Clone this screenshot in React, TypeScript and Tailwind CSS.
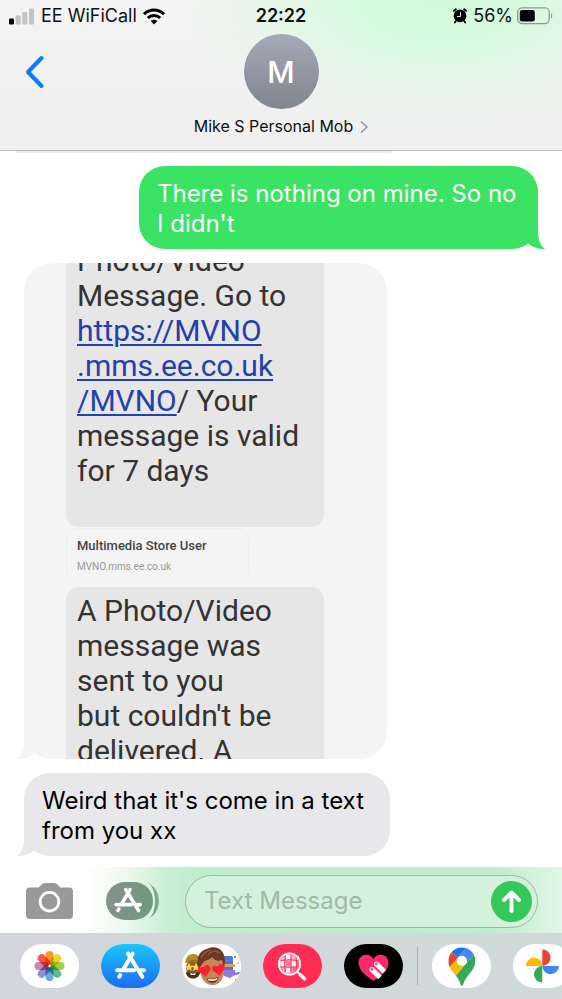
import type { ReactNode } from "react"
import clsx from "clsx"

function SignalIcon() {
  return (
    <svg viewBox="0 0 26 17" className="h-[17px] w-[26px]" aria-hidden="true">
      <rect x="0" y="10.5" width="5" height="6" rx="1.2" fill="#000" />
      <rect x="6.7" y="7.5" width="5" height="9" rx="1.2" fill="#c2c3c2" />
      <rect x="13.3" y="4" width="5" height="12.5" rx="1.2" fill="#c2c3c2" />
      <rect x="20" y="0.5" width="5" height="16" rx="1.2" fill="#c2c3c2" />
    </svg>
  )
}

function WifiIcon() {
  return (
    <svg viewBox="0 0 22 17" className="h-[17px] w-[22px]" fill="none" stroke="#000" strokeWidth="3" aria-hidden="true">
      <path d="M1 6.2C6.5.6 15.5.6 21 6.2" />
      <path d="M4.8 10C8.2 6.6 13.8 6.6 17.2 10" />
      <path d="M11 16.5l-3.3-3.4c1.8-1.8 4.8-1.8 6.6 0z" fill="#000" stroke="none" />
    </svg>
  )
}

function AlarmIcon() {
  return (
    <svg viewBox="0 0 14 16" className="h-4 w-[14px]" aria-hidden="true">
      <circle cx="7" cy="7.800" r="6.400" />
      <path d="M1 2.800L2.800 1.300M13 2.800L11.200 1.300" stroke="#000" strokeWidth="2" strokeLinecap="round" />
      <path d="M2.800 13l-1 1.500M11.200 13l1 1.500" stroke="#000" strokeWidth="1.800" strokeLinecap="round" />
      <path d="M7.500 4v4.500H4" stroke="#cdeed3" strokeWidth="1" fill="none" />
    </svg>
  )
}

function BatteryIcon() {
  return (
    <svg viewBox="0 0 36 18" className="h-[18px] w-9" aria-hidden="true">
      <rect x=".7" y=".9" width="31.6" height="15.8" rx="4.6" fill="none" stroke="#8d9a90" strokeWidth="1.3" />
      <rect x="2.8" y="3" width="15" height="11.6" rx="2.4" fill="#000" />
      <path d="M34 6.2c1.7.8 1.7 4.4 0 5.2z" fill="#8d9a90" />
    </svg>
  )
}

/** The little curl in the bottom corner of a bubble */
function Tail({ side, className }: { side: "left" | "right"; className: string }) {
  return (
    <svg
      viewBox="0 0 20 28"
      className={clsx("absolute bottom-0 h-7 w-5", side === "right" ? "-right-[7px]" : "-left-[7px] -scale-x-100", className)}
      aria-hidden="true"
    >
      <path d="M13 0V9C13 18 15 24.500 20 28C13 28 7 26 3 22L0 10Z" fill="currentColor" />
    </svg>
  )
}

function AppStoreGlyph() {
  return (
    <g fill="none" stroke="#fff" strokeWidth="4" strokeLinecap="round">
      <path d="M31.700 9.600L22 26" />
      <path d="M27 9.600L41.300 32.800" />
      <path d="M16.200 26.300H33" />
      <path d="M39.500 26.300H43" />
      <path d="M19.200 31.200L18.300 32.700" />
    </g>
  )
}

const petals = [
  { angle: 0, color: "#f99b1c" },
  { angle: 45, color: "#e4dc1f" },
  { angle: 90, color: "#a5ce4b" },
  { angle: 135, color: "#55bd90" },
  { angle: 180, color: "#6ba8dd" },
  { angle: 225, color: "#8f8fcb" },
  { angle: 270, color: "#c985b9" },
  { angle: 315, color: "#f4554d" },
]

function PhotosArt() {
  return (
    <g>
      {petals.map((petal) => (
        <rect
          key={petal.angle}
          x="25.500"
          y="7"
          width="8"
          height="14"
          rx="4"
          fill={petal.color}
          transform={`rotate(${petal.angle} 29.500 22)`}
          className="mix-blend-multiply"
        />
      ))}
    </g>
  )
}

function AppStoreArt() {
  return (
    <g>
      <defs>
        <linearGradient id="store" x1="0" y1="0" x2="0" y2="1">
          <stop offset="0" stopColor="#1cc5fb" />
          <stop offset="1" stopColor="#1c6df2" />
        </linearGradient>
      </defs>
      <rect width="59" height="44" fill="url(#store)" />
      <AppStoreGlyph />
    </g>
  )
}

const heart = "M0 7.500L-6 1.500C-9-2-4.500-8 0-3.500C4.500-8 9-2 6 1.500Z"
const star = "M0-5L1.400-1.500 5-1.300 2.300 1 3.200 4.500 0 2.600-3.200 4.500-2.300 1-5-1.300-1.400-1.500Z"

function MemojiArt() {
  return (
    <g>
      {/* bearded face on the left */}
      <ellipse cx="11" cy="24" rx="7" ry="9" fill="#8f5a33" />
      <path d="M4 28c3 1 10 1 14 0 0 4-3 6.500-7 6.500S4 32 4 28z" fill="#4a3020" />
      <path d="M3.500 19C3 7 19 7 19 19c-5-2-11-2-15.500 0z" fill="#b58d1f" />
      <path d="M3.500 18.500c4-2.500 11-2.500 15-1" stroke="#94711a" fill="none" />
      <path d={star} fill="#ffd64a" transform="translate(7 23) scale(.9)" />
      <path d={star} fill="#ffd64a" transform="translate(14 23) scale(.9)" />
      <path d="M8 29q3 1.500 6 0l-1 2H9z" fill="#fff" />
      {/* robot on the right */}
      <rect x="41" y="12" width="10" height="20" rx="3" fill="#6f63cf" />
      <rect x="41" y="12" width="10" height="6" rx="2" fill="#4b7ce0" />
      <rect x="41" y="20" width="12" height="3" rx="1.500" fill="#d9a54a" />
      <path d="M42 26h11v5l-5 3-6-2z" fill="#8d7be3" />
      <path d="M52 29q4 2 5-1" stroke="#7a68d4" strokeWidth="2" fill="none" />
      <circle cx="53" cy="13" r="1" fill="#2e6fe8" />
      <circle cx="56" cy="19" r="1" fill="#f0b636" />
      <circle cx="54" cy="36" r="1" fill="#3b7aea" />
      {/* heart eyes in the middle */}
      <path d="M18 20C17 33 22 41 30.500 41S43 33 42.500 19C40 9 22 9 18 20z" fill="#c98459" />
      <path d="M16.500 24C13 11 20 6 25 5c7-4 18-1 18 12l-1 7-2-8c-4 2-8 0-10-3-2 3-6 3-8.500 5-1.500 2-2 4-5 6z" fill="#6b3922" />
      <path d="M19 14c2-5 6-7 10-8M26 11c3-4 8-5 12-2" stroke="#96593a" strokeWidth="1.300" fill="none" />
      <path d="M24.500 34.500q6.500 1 12-1.500-1 5.500-6 6-4.500-.5-6-4.500z" fill="#7a2521" />
      <path d="M25.500 35q5.500 1 10-1l-1 2q-4 1.500-8 .5z" fill="#fff" />
      <path d={heart} fill="#f9222f" transform="translate(22.500 26) rotate(-10) scale(.9)" />
      <path d={heart} fill="#f9222f" transform="translate(36.500 25) rotate(-10) scale(.9)" />
      <path d="M18.500 23.500q1-1.800 3-1.200M32.500 22.500q1-1.800 3-1.200" stroke="#ff8b8d" fill="none" />
    </g>
  )
}

function ImagesArt() {
  return (
    <g>
      <rect width="59" height="44" fill="#ff2d55" />
      <circle cx="26.500" cy="20" r="9.500" fill="#ffb3c1" />
      <path d="M17.500 17h5v5h-5zM23 11h4.500v5H23zM28.500 17h4v5h-4zM23 23.500h4v5h-4zM33 12h3v4h-3z" fill="#fff" />
      <path d="M23 17h4.500v5H23zM28.500 23.500h4.500v5h-4.500zM33.500 17h3v5h-3z" fill="#ff7590" />
      <path d="M22.300 12q-1.500 8 0 16M28 10v19M33 12q1.500 8 0 16M18 16.500q9-1.500 17 0M17 22.800q9 1 19 0" stroke="#ff2d55" strokeWidth="1" fill="none" />
      <circle cx="26.500" cy="20" r="10.700" fill="none" stroke="#fff" strokeWidth="1.800" />
      <path d="M34 27.500L37 30.500" stroke="#fff" strokeWidth="2" />
      <path d="M37.500 31L41.500 34.800" stroke="#fff" strokeWidth="3.600" strokeLinecap="round" />
    </g>
  )
}

function DigitalTouchArt() {
  return (
    <g>
      <rect width="59" height="44" fill="#000" />
      <path d="M29.500 36.800C23 33 14.500 26.500 14.500 18.700c0-8.600 11-11 15-3.600 4-7.400 15-5 15 3.600 0 7.800-8.500 14.300-15 18.100z" fill="#fc2a6b" />
      <path d="M31 36.800c8-4.500 12-9 13.200-14V38H31z" fill="#000" />
      <path d="M28.500 26l7.500 7.500M33 20.500l7.300 7.300" stroke="#fff" strokeWidth="5" />
      <path d="M28 25.500v0M32.500 20v0" stroke="#fff" strokeWidth="5" strokeLinecap="round" />
      <path d="M27.800 25.300v0M32.300 19.800v0" stroke="#fc5a8c" strokeWidth="3" strokeLinecap="round" />
    </g>
  )
}

function MapsArt() {
  return (
    <g transform="translate(16.500 3.400) scale(.29)">
      <path fill="#1a73e8" d="M60.200 2.200C55.800.8 51 0 46.100 0 32 0 19.300 6.400 10.800 16.500l21.800 18.300L60.200 2.200z" />
      <path fill="#ea4335" d="M10.800 16.500C4.100 24.500 0 34.900 0 46.100c0 8.700 1.700 15.700 4.600 22l28-33.300-21.800-18.300z" />
      <path fill="#4285f4" d="M46.200 28.500c9.800 0 17.700 7.900 17.700 17.700 0 4.300-1.600 8.300-4.200 11.400 0 0 13.900-16.600 27.500-32.700-5.600-10.800-15.300-19-27-22.700L32.600 34.800c3.300-3.800 8.100-6.300 13.600-6.300" />
      <path fill="#fbbc04" d="M46.200 63.800c-9.800 0-17.700-7.900-17.700-17.700 0-4.300 1.500-8.300 4.100-11.300l-28 33.300c4.800 10.600 12.800 19.200 21 29.900l34.100-40.500c-3.300 3.900-8.100 6.300-13.500 6.300" />
      <path fill="#34a853" d="M59.100 109.200c15.400-24.100 33.300-35 33.300-63 0-7.700-1.900-14.900-5.200-21.300L25.600 98c2.600 3.400 5.300 7.300 7.900 11.300 9.400 14.500 6.800 23.100 12.800 23.100s3.400-8.700 12.800-23.200" />
    </g>
  )
}

function GooglePhotosArt() {
  return (
    <g>
      <path d="M29.300 5.400a8.300 8.300 0 0 1 0 16.600z" fill="#ea4335" />
      <path d="M12.700 22a8.300 8.300 0 0 1 16.600 0z" fill="#fbbc04" />
      <path d="M29.300 22h16.600a8.300 8.300 0 0 1-16.600 0z" fill="#4285f4" />
      <path d="M29.300 22v16.600a8.300 8.300 0 0 1 0-16.600z" fill="#34a853" />
    </g>
  )
}

function AppPill({ label, children }: { label: string; children: ReactNode }) {
  return (
    <button aria-label={label} className="h-11 w-[59px] shrink-0 overflow-hidden rounded-full bg-white">
      <svg viewBox="0 0 59 44" className="isolate h-full w-full" aria-hidden="true">
        {children}
      </svg>
    </button>
  )
}

function Header() {
  return (
    <header className="border-b border-[#bdbdc0] bg-[radial-gradient(ellipse_260px_130px_at_440px_0px,#cffbd9_0%,#d8f9df_35%,#e8f5ea_70%,transparent_100%),linear-gradient(to_bottom,#f3f4f3,#efefef)]">
      <div className="grid h-8 grid-cols-[1fr_auto_1fr] items-center px-[9px] text-lg text-[#111]">
        <div className="flex items-center gap-[6px]">
          <SignalIcon />
          <span>EE WiFiCall</span>
          <WifiIcon />
        </div>
        <span className="font-semibold">22:22</span>
        <div className="flex items-center justify-end gap-1">
          <AlarmIcon />
          <span className="ml-[2px]">56%</span>
          <BatteryIcon />
        </div>
      </div>
      <div className="grid grid-cols-[1fr_auto_1fr] pt-[2px]">
        <button aria-label="Back" className="mt-5 ml-6 h-9 w-6">
          <svg viewBox="0 0 24 36" className="h-full w-full" fill="none" stroke="#0a7aff" strokeWidth="4" strokeLinecap="round" strokeLinejoin="round">
            <path d="M17.500 4L4 18l13.500 14" />
          </svg>
        </button>
        <div className="flex h-[75px] w-[75px] items-center justify-center rounded-full bg-gradient-to-b from-[#a4aab8] to-[#828590] pt-[2px] text-[30px] font-medium text-white">
          M
        </div>
      </div>
      <button className="mx-auto flex h-[41px] items-center gap-[7px] pb-2 text-base text-[#111]">
        Mike S Personal Mob
        <svg viewBox="0 0 8 14" className="mt-[2px] h-[14px] w-2" fill="none" stroke="#8f939e" strokeWidth="1.500" aria-hidden="true">
          <path d="M1 1.500L7 7L1 12.500" />
        </svg>
      </button>
    </header>
  )
}

function Screenshot() {
  return (
    <div className="relative w-[363px]">
      <div className="h-[496px] overflow-hidden rounded-[28px] bg-[#f4f4f4] pl-[42px] font-[Roboto,sans-serif] text-[30px] leading-[35px] text-[#333]">
        <div className="-mt-5 w-[258px] rounded-b-[13px] bg-[#e6e6e6] px-[11px] pb-[39px]">
          <p>
            Photo/Video
            <br />
            Message. Go to
            <br />
            <a href="#mms" className="text-[#2440ad] underline decoration-2 underline-offset-[3px]">
              https://MVNO
              <br />
              .mms.ee.co.uk
              <br />
              /MVNO
            </a>
            / Your
            <br />
            message is valid
            <br />
            for 7 days
          </p>
        </div>
        <div className="mt-px h-[54px] w-[183px] rounded-xl border border-[#eeeeee] px-[10px] pt-[7px]">
          <p className="text-[13px] leading-5 font-medium text-[#444]">Multimedia Store User</p>
          <p className="text-[10px] leading-[22px] text-[#999]">MVNO.mms.ee.co.uk</p>
        </div>
        <div className="mt-[5px] w-[258px] rounded-t-[13px] bg-[#e6e6e6] px-[11px] pt-[6px]">
          <p>
            A Photo/Video
            <br />
            message was
            <br />
            sent to you
            <br />
            but couldn't be
            <br />
            delivered. A
          </p>
        </div>
      </div>
      <Tail side="left" className="text-[#f4f4f4]" />
    </div>
  )
}

function Composer() {
  return (
    <form className="mt-[11px] flex h-[66px] items-center bg-[linear-gradient(to_right,#fff_15%,#eef9f0_22%,#cdf0d6_29%,#bfeccb_35%,#bfeccb_88%,#e3f7e8_100%)] pt-[2px] pr-6 pl-[26px]">
      <button type="button" aria-label="Camera" className="h-9 w-[47px] shrink-0">
        <svg viewBox="0 0 47 36" className="h-full w-full" aria-hidden="true">
          <path d="M4 4.500h8.500l3-3Q17 0 19 0h9q2 0 3.500 1.500l3 3H43a4 4 0 0 1 4 4V32a4 4 0 0 1-4 4H4a4 4 0 0 1-4-4V8.500a4 4 0 0 1 4-4z" fill="#999" />
          <circle cx="23.500" cy="18.700" r="9.300" fill="none" stroke="#fff" strokeWidth="2.800" />
        </svg>
      </button>
      <button type="button" aria-label="Apps" className="ml-[33px] h-[38px] w-[53px] shrink-0">
        <svg viewBox="0 0 53 38" className="h-full w-full" aria-hidden="true">
          <defs>
            <linearGradient id="apps">
              <stop offset="0" stopColor="#87908b" />
              <stop offset="1" stopColor="#6f9a7c" />
            </linearGradient>
          </defs>
          <rect width="47" height="38" rx="19" fill="url(#apps)" />
          <path d="M42 1.500C56 7 56 31 42 36.500C51.500 30 51.500 8 42 1.500z" fill="#7ea88b" stroke="#7ea88b" strokeWidth=".6" />
          <path d="M41 .8C50.500 7 50.500 31 41 37.200" fill="none" stroke="#e1f6e6" strokeWidth="1.400" />
          <g transform="translate(-4.500 -1) scale(.9)">
            <AppStoreGlyph />
          </g>
        </svg>
      </button>
      <div className="ml-[26px] flex h-[53px] min-w-0 flex-1 items-center rounded-full border border-[#9fb5a5] bg-[#d4f2db] pr-[5px] pl-[18px]">
        <input
          aria-label="Text Message"
          placeholder="Text Message"
          className="min-w-0 flex-1 bg-transparent text-2xl text-black outline-none placeholder:text-[#a3b8a8]"
        />
        <button aria-label="Send" type="button" className="h-[41px] w-[41px] shrink-0 rounded-full bg-[#34c759]">
          <svg viewBox="0 0 41 41" className="h-full w-full" fill="none" stroke="#fff" strokeWidth="4" strokeLinecap="round" strokeLinejoin="round" aria-hidden="true">
            <path d="M20.500 30V12M13 19l7.500-7.500L28 19" />
          </svg>
        </button>
      </div>
    </form>
  )
}

export default function App() {
  return (
    <div className="flex min-h-screen flex-col overflow-hidden bg-white font-[Inter,sans-serif]">
      <Header />

      <main className="flex flex-1 flex-col px-6">
        {/* bottom edge of the message scrolled under the header */}
        <div className="-ml-2 h-[2px] w-[376px] rounded-br-full bg-[#e9e9eb]" />

        <div className="relative mt-[13px] w-fit max-w-[399px] self-end rounded-[26px] bg-[#3be365] px-[18px] pt-[13px] pb-[10px] text-2xl leading-[30px] text-white">
          There is nothing on mine. So no I didn't
          <Tail side="right" className="text-[#3be365]" />
        </div>

        <div className="mt-[14px]">
          <Screenshot />
        </div>

        <div className="relative mt-[14px] w-fit max-w-[366px] rounded-[26px] bg-[#e8e8ea] px-[18px] pt-[13px] pb-[10px] text-2xl leading-[30px] text-black">
          Weird that it's come in a text from you xx
          <Tail side="left" className="text-[#e8e8ea]" />
        </div>
      </main>

      <Composer />

      <nav className="flex h-[66px] items-center gap-[22px] overflow-hidden bg-gradient-to-r from-[#d3d6dc] to-[#d1d9da] pl-5">
        <AppPill label="Photos"><PhotosArt /></AppPill>
        <AppPill label="App Store"><AppStoreArt /></AppPill>
        <AppPill label="Memoji"><MemojiArt /></AppPill>
        <AppPill label="Images"><ImagesArt /></AppPill>
        <AppPill label="Digital Touch"><DigitalTouchArt /></AppPill>
        <div className="-mx-2 h-[38px] w-px shrink-0 bg-[#aab0b2]" />
        <AppPill label="Google Maps"><MapsArt /></AppPill>
        <AppPill label="Google Photos"><GooglePhotosArt /></AppPill>
      </nav>
    </div>
  )
}
